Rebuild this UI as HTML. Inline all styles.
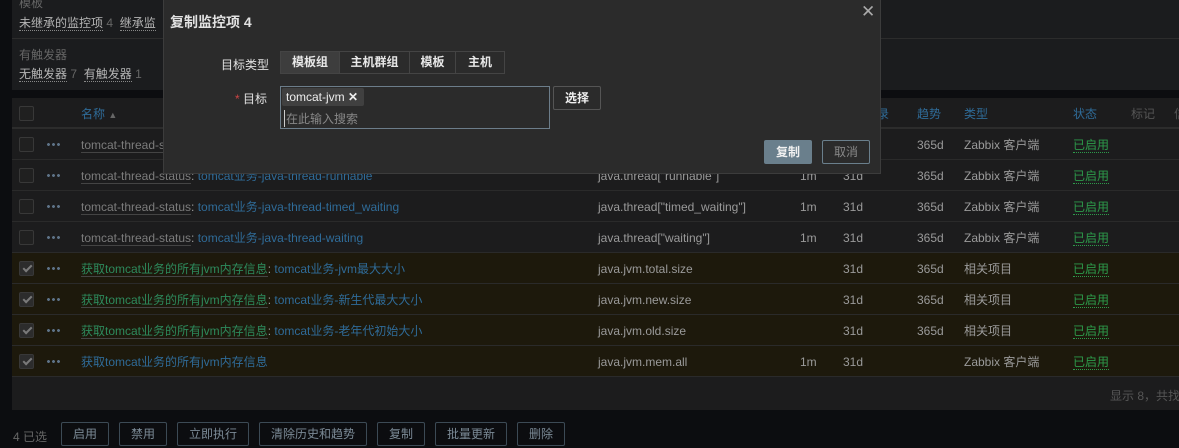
<!DOCTYPE html>
<html><head><meta charset="utf-8"><style>
*{box-sizing:border-box;margin:0;padding:0}
body{width:1179px;height:448px;overflow:hidden;background:#0c0d10;font-family:"Liberation Sans","Noto Sans CJK SC",sans-serif;font-size:12px;color:#9a9a9a;position:relative}
.abs{position:absolute;white-space:nowrap}
.filter{position:absolute;left:12px;top:0;width:1167px;height:90px;background:#1b1c1e}
.u{border-bottom:1px dotted #888;color:#b5b5b5}
.tbl{position:absolute;left:12px;top:98px;width:1167px;height:312px;background:#1c1c1d}
.row{position:absolute;left:0;width:1167px;height:31px;border-bottom:1px solid #2a2a2a}
.sel{background:#1d190c}
.cb{position:absolute;left:7px;top:8px;width:15px;height:15px;border:1px solid #383838;border-radius:2px;background:#202020}
.cb.on{background:#2c2c2c}
.cb.on::after{content:"";position:absolute;left:3px;top:3px;width:7px;height:3px;border-left:2px solid #7a7a7a;border-bottom:2px solid #7a7a7a;transform:rotate(-45deg)}
.dots{position:absolute;left:34px;top:14px;width:16px;height:3px;background:radial-gradient(circle,#5d7287 1.3px,transparent 1.6px) 0 0/5px 3px repeat-x}
.c{position:absolute;top:8px;line-height:16px;height:16px;white-space:nowrap}
.gl{color:#7c7c7c;border-bottom:1px solid #444}
.gr{color:#2d8a5c;border-bottom:1px solid #444}
.bl{color:#2f6b98}
.st{color:#2d9a4a;border-bottom:1px dotted #2d9a4a}
.btn{position:absolute;top:422px;height:24px;border:1px solid #3c4a55;border-radius:2px;color:#7b8a96;text-align:center;line-height:22px;font-size:12px}
.modal{position:absolute;left:163px;top:-2px;width:718px;height:176px;background:#2b2b2b;border:1px solid #3c3c3c}
.seg{position:absolute;top:52px;height:23px;border:1px solid #444;color:#e8e8e8;text-align:center;line-height:21px;font-weight:bold}
</style></head><body>
<div class="filter">
<div class="abs" style="left:7px;top:-6px;color:#666">模板</div>
<div class="abs" style="left:7px;top:14px"><span class="u">未继承的监控项</span> <span style="color:#666">4</span>&nbsp; <span class="u">继承监</span></div>
<div style="position:absolute;left:0;top:38px;width:1167px;height:1px;background:#2c2c2c"></div>
<div class="abs" style="left:7px;top:46px;color:#666">有触发器</div>
<div class="abs" style="left:7px;top:65px"><span class="u">无触发器</span> <span style="color:#666">7</span>&nbsp; <span class="u">有触发器</span> <span style="color:#666">1</span></div>
</div>
<div class="tbl">
<div class="row" style="top:0;height:31px;border-bottom:2px solid #2c2c2c"><div class="cb" style="top:8px"></div>
<div class="c" style="left:69px;color:#2f6b98">名称 <span style="color:#666;font-size:9px">▲</span></div>
<div class="c" style="left:865px;color:#2f6b98">录</div>
<div class="c" style="left:905px;color:#2f6b98">趋势</div>
<div class="c" style="left:952px;color:#2f6b98">类型</div>
<div class="c" style="left:1061px;color:#2f6b98">状态</div>
<div class="c" style="left:1119px;color:#555">标记</div>
<div class="c" style="left:1162px;color:#555">信</div></div>

<div class="row" style="top:31px"><div class="cb"></div><div class="dots"></div><div class="c" style="left:69px"><span class="gl">tomcat-thread-status</span>: <span class="bl">tomcat业务-java-thread-blocked</span></div><div class="c" style="left:586px">java.thread["blocked"]</div><div class="c" style="left:788px">1m</div><div class="c" style="left:831px">31d</div><div class="c" style="left:905px">365d</div><div class="c" style="left:952px">Zabbix 客户端</div><div class="c" style="left:1061px"><span class="st">已启用</span></div></div>
<div class="row" style="top:62px"><div class="cb"></div><div class="dots"></div><div class="c" style="left:69px"><span class="gl">tomcat-thread-status</span>: <span class="bl">tomcat业务-java-thread-runnable</span></div><div class="c" style="left:586px">java.thread["runnable"]</div><div class="c" style="left:788px">1m</div><div class="c" style="left:831px">31d</div><div class="c" style="left:905px">365d</div><div class="c" style="left:952px">Zabbix 客户端</div><div class="c" style="left:1061px"><span class="st">已启用</span></div></div>
<div class="row" style="top:93px"><div class="cb"></div><div class="dots"></div><div class="c" style="left:69px"><span class="gl">tomcat-thread-status</span>: <span class="bl">tomcat业务-java-thread-timed_waiting</span></div><div class="c" style="left:586px">java.thread["timed_waiting"]</div><div class="c" style="left:788px">1m</div><div class="c" style="left:831px">31d</div><div class="c" style="left:905px">365d</div><div class="c" style="left:952px">Zabbix 客户端</div><div class="c" style="left:1061px"><span class="st">已启用</span></div></div>
<div class="row" style="top:124px"><div class="cb"></div><div class="dots"></div><div class="c" style="left:69px"><span class="gl">tomcat-thread-status</span>: <span class="bl">tomcat业务-java-thread-waiting</span></div><div class="c" style="left:586px">java.thread["waiting"]</div><div class="c" style="left:788px">1m</div><div class="c" style="left:831px">31d</div><div class="c" style="left:905px">365d</div><div class="c" style="left:952px">Zabbix 客户端</div><div class="c" style="left:1061px"><span class="st">已启用</span></div></div>
<div class="row sel" style="top:155px"><div class="cb on"></div><div class="dots"></div><div class="c" style="left:69px"><span class="gr">获取tomcat业务的所有jvm内存信息</span>: <span class="bl">tomcat业务-jvm最大大小</span></div><div class="c" style="left:586px">java.jvm.total.size</div><div class="c" style="left:831px">31d</div><div class="c" style="left:905px">365d</div><div class="c" style="left:952px">相关项目</div><div class="c" style="left:1061px"><span class="st">已启用</span></div></div>
<div class="row sel" style="top:186px"><div class="cb on"></div><div class="dots"></div><div class="c" style="left:69px"><span class="gr">获取tomcat业务的所有jvm内存信息</span>: <span class="bl">tomcat业务-新生代最大大小</span></div><div class="c" style="left:586px">java.jvm.new.size</div><div class="c" style="left:831px">31d</div><div class="c" style="left:905px">365d</div><div class="c" style="left:952px">相关项目</div><div class="c" style="left:1061px"><span class="st">已启用</span></div></div>
<div class="row sel" style="top:217px"><div class="cb on"></div><div class="dots"></div><div class="c" style="left:69px"><span class="gr">获取tomcat业务的所有jvm内存信息</span>: <span class="bl">tomcat业务-老年代初始大小</span></div><div class="c" style="left:586px">java.jvm.old.size</div><div class="c" style="left:831px">31d</div><div class="c" style="left:905px">365d</div><div class="c" style="left:952px">相关项目</div><div class="c" style="left:1061px"><span class="st">已启用</span></div></div>
<div class="row sel" style="top:248px"><div class="cb on"></div><div class="dots"></div><div class="c" style="left:69px"><span class="bl">获取tomcat业务的所有jvm内存信息</span></div><div class="c" style="left:586px">java.jvm.mem.all</div><div class="c" style="left:788px">1m</div><div class="c" style="left:831px">31d</div><div class="c" style="left:952px">Zabbix 客户端</div><div class="c" style="left:1061px"><span class="st">已启用</span></div></div>
<div class="c" style="left:1098px;top:290px;color:#555">显示 8，共找到 8</div>
</div>
<div class="abs" style="left:13px;top:428px;color:#666">4 已选</div>
<div class="btn" style="left:61px;width:48px">启用</div>
<div class="btn" style="left:119px;width:48px">禁用</div>
<div class="btn" style="left:177px;width:72px">立即执行</div>
<div class="btn" style="left:259px;width:108px">清除历史和趋势</div>
<div class="btn" style="left:377px;width:48px">复制</div>
<div class="btn" style="left:435px;width:72px">批量更新</div>
<div class="btn" style="left:517px;width:48px">删除</div>

<div class="modal">
<div class="abs" style="left:6px;top:13px;font-size:14px;font-weight:bold;color:#e2e2e2">复制监控项 4</div>
<div class="abs" style="left:697px;top:3px;font-size:17px;color:#aaa">✕</div>
<div class="abs" style="left:57px;top:57px;color:#e0e0e0">目标类型</div>
<div class="seg" style="left:116px;width:60px;background:#3d3d3d">模板组</div>
<div class="seg" style="left:175px;width:71px">主机群组</div>
<div class="seg" style="left:245px;width:47px">模板</div>
<div class="seg" style="left:291px;width:50px">主机</div>
<div class="abs" style="left:71px;top:91px;color:#e0e0e0"><span style="color:#c44">*</span> 目标</div>
<div style="position:absolute;left:116px;top:87px;width:270px;height:43px;border:1px solid #6c7d8a;background:#2b2b2b"></div>
<div class="abs" style="left:118px;top:89px;height:18px;width:82px;background:#404040;border-radius:2px;color:#eee;line-height:18px;padding-left:4px">tomcat-jvm <b>✕</b></div>
<div class="abs" style="left:120px;top:111px;color:#888;border-left:1px solid #ccc;padding-left:1px">在此输入搜索</div>
<div class="abs" style="left:389px;top:87px;width:48px;height:24px;border:1px solid #555;border-radius:2px;color:#eee;text-align:center;line-height:22px;font-weight:bold">选择</div>
<div class="abs" style="left:600px;top:141px;width:48px;height:24px;background:#6a7f8c;border-radius:2px;color:#f0f0f0;text-align:center;line-height:24px;font-weight:bold">复制</div>
<div class="abs" style="left:658px;top:141px;width:48px;height:24px;border:1px solid #6a7f8c;border-radius:2px;color:#888;text-align:center;line-height:22px">取消</div>
</div>
</body></html>
